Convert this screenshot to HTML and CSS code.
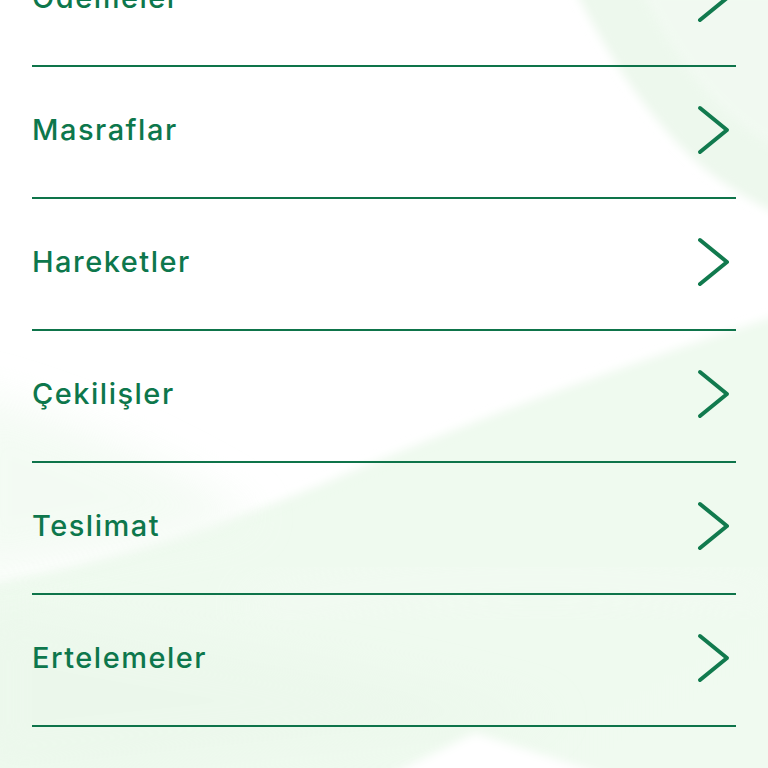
FILE: index.html
```
<!DOCTYPE html>
<html lang="tr">
<head>
<meta charset="utf-8">
<title>Menü</title>
<link rel="stylesheet" href="styles.css">
</head>
<body>
<div class="page">
  <svg class="bg" width="768" height="768" viewBox="0 0 768 768" aria-hidden="true">
    <defs>
      <filter id="soft" x="-20%" y="-20%" width="140%" height="140%"><feGaussianBlur stdDeviation="5"/></filter>
      <filter id="softer" x="-30%" y="-30%" width="160%" height="160%"><feGaussianBlur stdDeviation="22"/></filter>
      <linearGradient id="g1" x1="0" y1="0" x2="1" y2="1">
        <stop offset="0" stop-color="#eef9ee"/>
        <stop offset="1" stop-color="#f0faf0"/>
      </linearGradient>
    </defs>
    <path d="M575 -10 C610 60 650 120 700 165 C725 185 748 200 780 215 L780 -10 Z" fill="#edf8ed" filter="url(#soft)"/>
    <path d="M640 -10 C680 70 720 120 780 150 L780 -10 Z" fill="#f4fbf4" opacity="0.6" filter="url(#soft)"/>
    <path d="M780 315 C640 360 470 420 320 485 C220 525 120 560 -20 585 L-20 780 L780 780 Z" fill="url(#g1)" filter="url(#soft)"/>
    <path d="M-40 390 C80 420 180 470 260 520 L-40 580 Z" fill="#f1faf1" opacity="0.8" filter="url(#softer)"/>
    <path d="M-20 600 C150 640 350 660 560 720 L-20 780 Z" fill="#e9f6e9" opacity="0.5" filter="url(#softer)"/>
    <path d="M380 780 L475 733 L620 780 Z" fill="#ffffff" filter="url(#soft)"/>
    <path d="M250 610 C400 580 560 560 780 600" stroke="#f5fbf5" stroke-width="30" fill="none" opacity="0.7" filter="url(#softer)"/>
  </svg>
  <ul class="menu">
    <li class="item"><span class="label">Ödemeler</span><svg class="chev" width="34" height="50" viewBox="0 0 34 50"><path d="M3 3 L30 25 L3 47" fill="none" stroke="currentColor" stroke-width="4" stroke-linecap="round" stroke-linejoin="round"/></svg></li>
    <li class="item"><span class="label">Masraflar</span><svg class="chev" width="34" height="50" viewBox="0 0 34 50"><path d="M3 3 L30 25 L3 47" fill="none" stroke="currentColor" stroke-width="4" stroke-linecap="round" stroke-linejoin="round"/></svg></li>
    <li class="item"><span class="label">Hareketler</span><svg class="chev" width="34" height="50" viewBox="0 0 34 50"><path d="M3 3 L30 25 L3 47" fill="none" stroke="currentColor" stroke-width="4" stroke-linecap="round" stroke-linejoin="round"/></svg></li>
    <li class="item"><span class="label">Çekilişler</span><svg class="chev" width="34" height="50" viewBox="0 0 34 50"><path d="M3 3 L30 25 L3 47" fill="none" stroke="currentColor" stroke-width="4" stroke-linecap="round" stroke-linejoin="round"/></svg></li>
    <li class="item"><span class="label">Teslimat</span><svg class="chev" width="34" height="50" viewBox="0 0 34 50"><path d="M3 3 L30 25 L3 47" fill="none" stroke="currentColor" stroke-width="4" stroke-linecap="round" stroke-linejoin="round"/></svg></li>
    <li class="item"><span class="label">Ertelemeler</span><svg class="chev" width="34" height="50" viewBox="0 0 34 50"><path d="M3 3 L30 25 L3 47" fill="none" stroke="currentColor" stroke-width="4" stroke-linecap="round" stroke-linejoin="round"/></svg></li>
  </ul>
</div>
</body>
</html>
```
FILE: styles.css
```
html, body {
  margin: 0;
  padding: 0;
  background: #ffffff;
}
body {
  width: 768px;
  height: 768px;
  overflow: hidden;
}
.page {
  position: relative;
  width: 768px;
  height: 768px;
  overflow: hidden;
  background: #ffffff;
}
.bg {
  position: absolute;
  left: 0;
  top: 0;
  z-index: 0;
}
.menu {
  position: relative;
  z-index: 1;
  list-style: none;
  margin: -65px 0 0 0;
  padding: 0 32px;
  display: flex;
  flex-direction: column;
}
.item {
  box-sizing: border-box;
  height: 132px;
  border-bottom: 2px solid #0e744a;
  display: flex;
  align-items: center;
  justify-content: space-between;
  color: #0d774c;
}
.label {
  font-family: "Inter", "Noto Sans", sans-serif;
  font-weight: 500;
  font-size: 29px;
  letter-spacing: 1.5px;
  margin-top: -6px;
}
.chev {
  color: #117a4e;
  margin-right: 5px;
  margin-top: -5px;
}
```
